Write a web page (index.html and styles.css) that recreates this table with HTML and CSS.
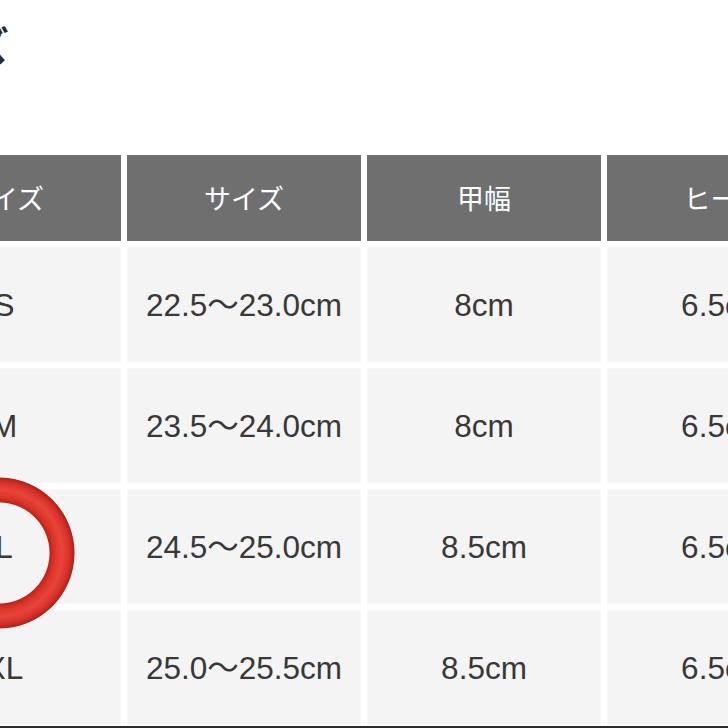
FILE: index.html
```html
<!DOCTYPE html>
<html lang="ja">
<head>
<meta charset="utf-8">
<link rel="stylesheet" href="styles.css">
</head>
<body>
<div class="page">
  <h2 class="title">サイズ</h2>
  <div class="size-table">
    <div class="cell head">サイズ</div>
    <div class="cell head">サイズ</div>
    <div class="cell head">甲幅</div>
    <div class="cell head">ヒール</div>

    <div class="cell">S</div>
    <div class="cell">22.5～23.0cm</div>
    <div class="cell">8cm</div>
    <div class="cell">6.5cm</div>

    <div class="cell">M</div>
    <div class="cell">23.5～24.0cm</div>
    <div class="cell">8cm</div>
    <div class="cell">6.5cm</div>

    <div class="cell">L</div>
    <div class="cell">24.5～25.0cm</div>
    <div class="cell">8.5cm</div>
    <div class="cell">6.5cm</div>

    <div class="cell">XL</div>
    <div class="cell">25.0～25.5cm</div>
    <div class="cell">8.5cm</div>
    <div class="cell">6.5cm</div>
  </div>
  <div class="bottom-line"></div>
  <div class="ring"></div>
</div>
</body>
</html>
```
FILE: styles.css
```css
html, body {
  margin: 0;
  padding: 0;
  background: #ffffff;
}
body {
  width: 728px;
  height: 728px;
  overflow: hidden;
  font-family: "Liberation Sans", "Noto Sans CJK JP", sans-serif;
}
.page {
  position: relative;
  width: 728px;
  height: 728px;
  overflow: hidden;
}
.title {
  margin: 0 0 0 -110px;
  height: 155px;
  padding-top: 22px;
  box-sizing: border-box;
  font-size: 40px;
  line-height: 44px;
  font-weight: bold;
  color: #2a2a2a;
  font-family: "Noto Sans CJK JP", sans-serif;
  white-space: nowrap;
}
.size-table {
  display: grid;
  grid-template-columns: repeat(4, 234px);
  grid-template-rows: 86px repeat(4, 115px);
  gap: 6px;
  margin-left: -113px;
}
.cell {
  display: flex;
  align-items: center;
  justify-content: center;
  background: #f4f4f4;
  color: #383838;
  font-size: 31.5px;
  line-height: 36px;
  white-space: nowrap;
  box-shadow: inset 0 0 0 1px #f8f8f8;
}
.cell.head {
  background: #6f6f6f;
  color: #ffffff;
  font-size: 27px;
  font-family: "Noto Sans CJK JP", sans-serif;
  box-shadow: none;
}
.bottom-line {
  position: absolute;
  left: 0;
  right: 0;
  bottom: 0;
  height: 2px;
  background: #2e2e2e;
}
.ring {
  position: absolute;
  left: -77px;
  top: 477px;
  width: 152px;
  height: 152px;
  border-radius: 50%;
  background: radial-gradient(circle closest-side,
    transparent 0, transparent 50px,
    #bd241b 51px, #dc3428 56px, #e8443a 63px, #d8332a 70px, #b52016 75px, rgba(181,32,22,0) 76px);
}
```
